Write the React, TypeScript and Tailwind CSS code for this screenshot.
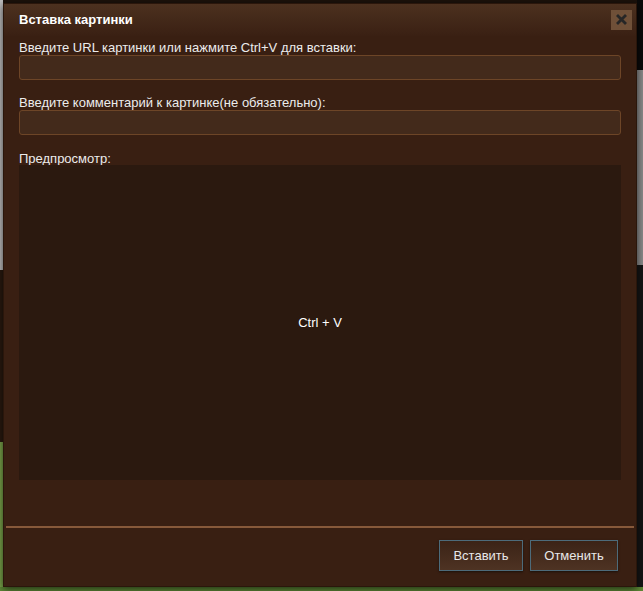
import React from "react";

export default function App() {
  return (
    <div
      className="relative w-[643px] h-[591px] overflow-hidden bg-[#1c120b]"
      style={{ fontFamily: '"Liberation Sans", Arial, sans-serif' }}
    >
      {/* page behind the modal */}
      <div className="flex h-full">
        <div className="w-[3px] flex flex-col">
          <div className="h-[270px] bg-[#bdbdbd]" />
          <div className="h-[172px] bg-[#2a1a10]" />
          <div className="flex-1 bg-[#7aa44a]" />
        </div>
        <div className="flex-1" />
        <div className="w-[6px] flex flex-col">
          <div className="h-[70px] bg-[#0a0a0a]" />
          <div className="h-[195px] bg-[#8a8a8a]" />
          <div className="flex-1 bg-[#151515]" />
        </div>
      </div>
      <div className="absolute left-0 right-0 bottom-0 h-[4px] bg-[#5f8a36]" />

      {/* dialog */}
      <div className="absolute left-[3px] top-[3px] w-[634px] h-[584px] flex flex-col bg-[#391f12] border border-[#2a160b] shadow-[0_2px_8px_rgba(0,0,0,0.7)] text-[#ececec] text-[13px]">
        <div className="h-[32px] flex items-center justify-between pl-[15px] pr-[4px] bg-gradient-to-b from-[#4c311f] to-[#3a2013]">
          <span className="font-bold text-[13px] text-white">Вставка картинки</span>
          <button className="w-[21px] h-[20px] bg-[#6f5038] flex items-center justify-center mt-[-1px]">
            <svg width="11" height="11" viewBox="0 0 11 11">
              <path d="M2 2 L9 9 M9 2 L2 9" stroke="#262626" strokeWidth="2.8" strokeLinecap="square" />
            </svg>
          </button>
        </div>
        <div className="flex flex-col px-[15px]">
          <label className="mt-[4px] leading-[15px]">Введите URL картинки или нажмите Ctrl+V для вставки:</label>
          <input className="mt-0 h-[25px] rounded-[3px] bg-[#432a1b] border border-[#6d4527] outline-none px-2 text-white" />
          <label className="mt-[15px] leading-[15px]">Введите комментарий к картинке(не обязательно):</label>
          <input className="mt-0 h-[25px] rounded-[3px] bg-[#432a1b] border border-[#6d4527] outline-none px-2 text-white" />
          <label className="mt-[16px] leading-[15px]">Предпросмотр:</label>
          <div className="mt-[-1px] h-[315px] bg-[#2b190f] flex items-center justify-center text-white">
            Ctrl + V
          </div>
        </div>
        <div className="mt-[46px] mx-[2px] h-[2px] bg-[#87593a]" />
        <div className="flex justify-end gap-[7px] pr-[18px] mt-[12px]">
          <button className="w-[84px] h-[31px] border border-[#4d6b7a] bg-gradient-to-b from-[#3b2316] to-[#4e3323] text-[#e8e8e8] text-[13px] shadow-[0_1px_2px_rgba(0,0,0,0.5)]">
            Вставить
          </button>
          <button className="w-[88px] h-[31px] border border-[#4d6b7a] bg-gradient-to-b from-[#3b2316] to-[#4e3323] text-[#e8e8e8] text-[13px] shadow-[0_1px_2px_rgba(0,0,0,0.5)]">
            Отменить
          </button>
        </div>
      </div>
    </div>
  );
}
